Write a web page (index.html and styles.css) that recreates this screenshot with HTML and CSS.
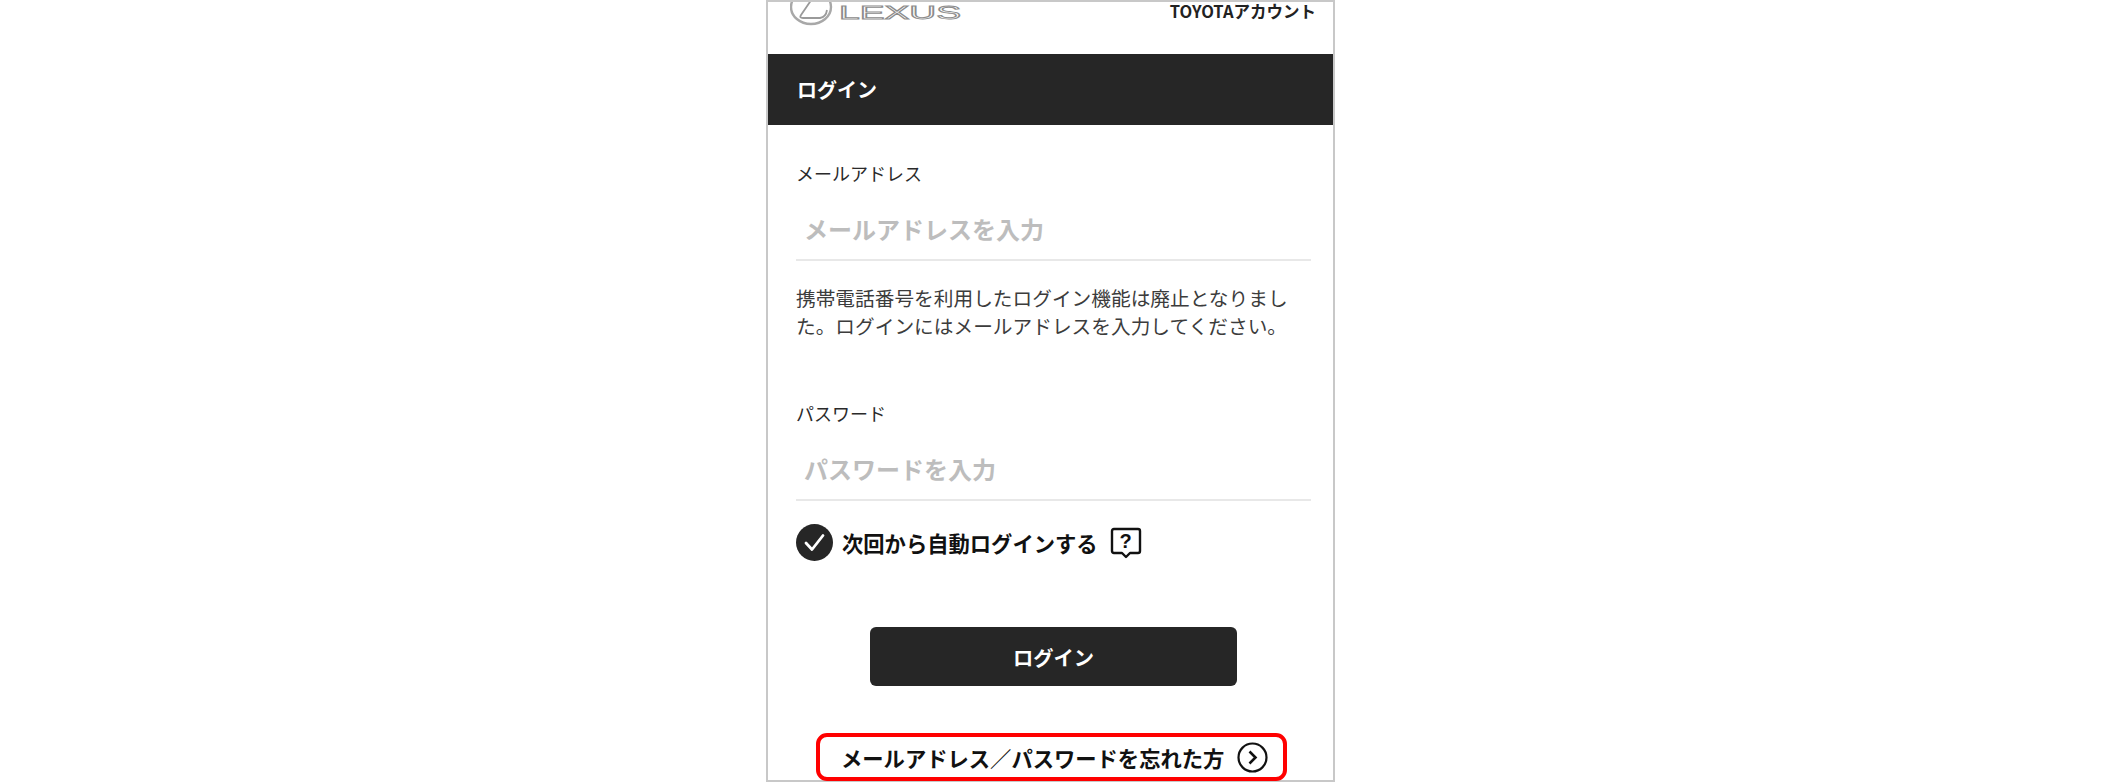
FILE: index.html
```html
<!DOCTYPE html>
<html lang="ja">
<head>
  <meta charset="UTF-8" />
  <title>ログイン</title>
  <link rel="stylesheet" href="styles.css">
</head>
<body>

  <div class="phone">
    <div class="topbar">
      <svg class="logo" width="175" height="30" viewBox="0 0 175 30">
        <ellipse cx="21" cy="5" rx="20" ry="17" fill="none" stroke="#a8a8a8" stroke-width="2.4"/>
        <path d="M24 -6 L11 13 Q9 16 13 16 L30 16 Q36 15 37 8" fill="none" stroke="#9a9a9a" stroke-width="1.8"/>
        <text class="logo-text" x="49" y="16.500" textLength="122" lengthAdjust="spacingAndGlyphs">LEXUS</text>
      </svg>
      <span class="account">TOYOTAアカウント</span>
    </div>

    <div class="title">ログイン</div>

    <div class="form-box">
      <label class="field-label first">メールアドレス</label>
      <div class="field">メールアドレスを入力</div>
      <p class="note">携帯電話番号を利用したログイン機能は廃止となりました。ログインにはメールアドレスを入力してください。</p>

      <label class="field-label second">パスワード</label>
      <div class="field">パスワードを入力</div>

      <div class="auto-login">
        <svg class="check" width="37" height="37" viewBox="0 0 37 37">
          <circle cx="18.5" cy="18.5" r="18.5" fill="#262626"/>
          <path d="M10 19 L16 25.5 L27 11.5" fill="none" stroke="#fff" stroke-width="2.8" stroke-linecap="round" stroke-linejoin="round"/>
        </svg>
        <span class="auto-text">次回から自動ログインする</span>
        <span class="help">
          <svg width="32" height="32" viewBox="0 0 32 32">
            <path d="M4 2 H28 Q30 2 30 4 V24 Q30 26 28 26 H20 L16 30 L12 26 H4 Q2 26 2 24 V4 Q2 2 4 2 Z" fill="none" stroke="#111" stroke-width="2.4" stroke-linejoin="round"/>
          </svg>
          <span class="help-mark">?</span>
        </span>
      </div>

      <button class="btn">ログイン</button>

      <div class="forgot">
        <span>メールアドレス／パスワードを忘れた方</span>
        <svg width="31" height="31" viewBox="0 0 31 31">
          <circle cx="15.500" cy="15.500" r="14" fill="none" stroke="#111" stroke-width="2.2"/>
          <path d="M12.500 9.500 L18.500 15.500 L12.500 21.500" fill="none" stroke="#111" stroke-width="2.600"/>
        </svg>
      </div>
    </div>
  </div>

</body>
</html>
```

FILE: styles.css
```css
body {
  margin: 0;
  background: #fff;
  font-family: "Noto Sans CJK JP", "Noto Sans", sans-serif;
  color: #111;
  overflow: hidden;
}

.phone {
  width: 569px;
  height: 782px;
  margin-left: 766px;
  box-sizing: border-box;
  border: 2px solid #c8c8c8;
}

.topbar {
  height: 52px;
  display: flex;
  justify-content: space-between;
  padding: 0 17px 0 22px;
}

.logo {
  display: block;
}

.logo-text {
  font-family: "Liberation Sans", sans-serif;
  font-size: 18px;
  fill: #fff;
  stroke: #8c8c8c;
  stroke-width: 0.9px;
}

.account {
  font-size: 16.5px;
  font-weight: bold;
  line-height: 18px;
  color: #222;
}

.title {
  height: 71px;
  padding-left: 29px;
  display: flex;
  align-items: center;
  background: #262626;
  color: #fff;
  font-size: 20px;
  font-weight: bold;
}

.form-box {
  padding: 0 22px 0 28px;
}

.field-label {
  display: block;
  font-size: 18px;
  line-height: 24px;
  color: #2a2a2a;
}

.field-label.first {
  margin-top: 36px;
}

.field-label.second {
  margin-top: 61px;
}

.field {
  padding: 27px 0 13px 8px;
  border-bottom: 2px solid #e8e8e8;
  font-size: 24px;
  font-weight: bold;
  line-height: 34px;
  color: #bdbdbd;
}

.note {
  margin: 23px 0 0;
  padding-right: 12px;
  font-size: 19.7px;
  line-height: 28px;
  color: #3c3c3c;
}

.auto-login {
  margin-top: 23px;
  display: flex;
  align-items: center;
}

.check {
  display: block;
}

.auto-text {
  margin-left: 9px;
  font-size: 21.300px;
  font-weight: bold;
  line-height: 36px;
}

.help {
  position: relative;
  width: 32px;
  height: 32px;
  margin-left: 12px;
}

.help-mark {
  position: absolute;
  top: 2px;
  left: 0;
  width: 32px;
  text-align: center;
  font-family: "Liberation Sans", sans-serif;
  font-size: 20px;
  font-weight: bold;
  line-height: 24px;
}

.btn {
  display: block;
  width: 367px;
  height: 59px;
  margin: 66px 0 0 74px;
  background: #262626;
  color: #fff;
  border: none;
  border-radius: 6px;
  font-family: inherit;
  font-size: 20.300px;
  font-weight: bold;
}

.forgot {
  width: 471px;
  height: 48px;
  margin: 47px 0 0 20px;
  padding-left: 21px;
  box-sizing: border-box;
  border: 4px solid #f00;
  border-radius: 11px;
  display: flex;
  align-items: center;
  gap: 13px;
  font-size: 21.300px;
  font-weight: bold;
  white-space: nowrap;
}
```
